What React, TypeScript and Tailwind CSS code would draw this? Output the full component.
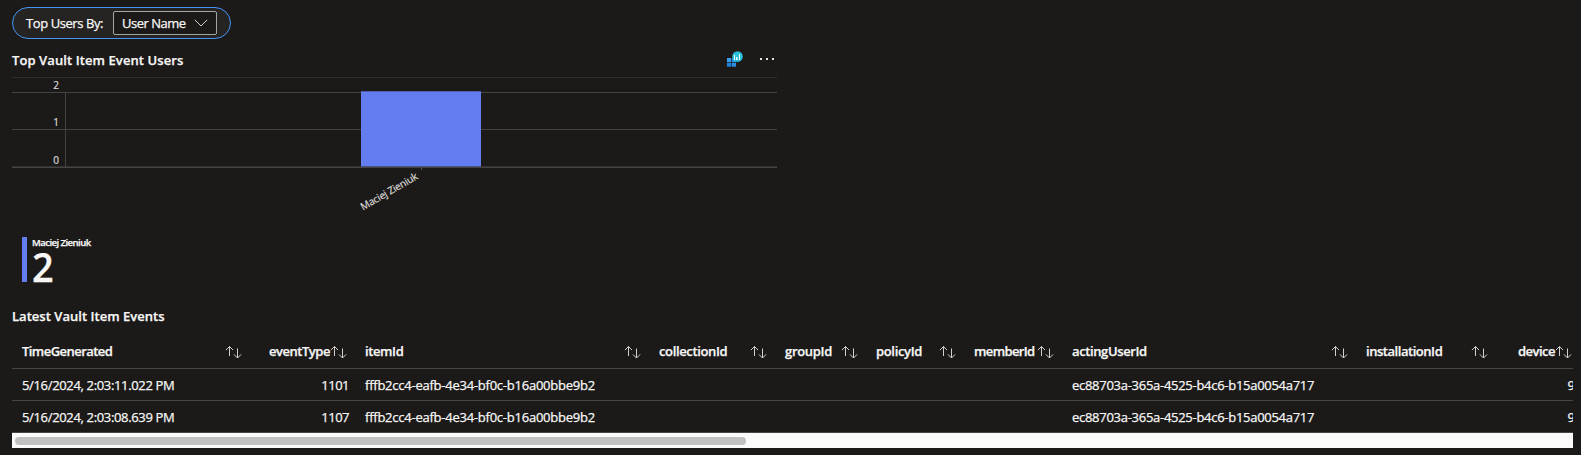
import React from "react";

type Column = {
  key: string;
  width: string;
  tracking: string;
  layout: string;
  align?: "right";
};

const columns: Column[] = [
  { key: "TimeGenerated", width: "w-[245px]", tracking: "tracking-[-0.55px]", layout: "justify-between pl-[10px] pr-[15px]" },
  { key: "eventType", width: "w-[98px]", tracking: "tracking-[-0.47px]", layout: "justify-end pr-[8px]", align: "right" },
  { key: "itemId", width: "w-[294px]", tracking: "tracking-[-0.4px]", layout: "justify-between pl-[10px] pr-[8px]" },
  { key: "collectionId", width: "w-[126px]", tracking: "tracking-[-0.36px]", layout: "justify-between pl-[10px] pr-[8px]" },
  { key: "groupId", width: "w-[91px]", tracking: "tracking-[-0.32px]", layout: "justify-between pl-[10px] pr-[8px]" },
  { key: "policyId", width: "w-[98px]", tracking: "tracking-[-0.34px]", layout: "justify-between pl-[10px] pr-[8px]" },
  { key: "memberId", width: "w-[98px]", tracking: "tracking-[-0.62px]", layout: "justify-between pl-[10px] pr-[8px]" },
  { key: "actingUserId", width: "w-[294px]", tracking: "tracking-[-0.38px]", layout: "justify-between pl-[10px] pr-[8px]" },
  { key: "installationId", width: "w-[140px]", tracking: "tracking-[-0.46px]", layout: "justify-between pl-[10px] pr-[8px]" },
  { key: "device", width: "w-[85px]", tracking: "tracking-[-0.5px]", layout: "justify-end pr-[9px]", align: "right" },
];

const rows: Record<string, string>[] = [
  {
    TimeGenerated: "5/16/2024, 2:03:11.022 PM",
    eventType: "1101",
    itemId: "fffb2cc4-eafb-4e34-bf0c-b16a00bbe9b2",
    actingUserId: "ec88703a-365a-4525-b4c6-b15a0054a717",
    device: "9",
  },
  {
    TimeGenerated: "5/16/2024, 2:03:08.639 PM",
    eventType: "1107",
    itemId: "fffb2cc4-eafb-4e34-bf0c-b16a00bbe9b2",
    actingUserId: "ec88703a-365a-4525-b4c6-b15a0054a717",
    device: "9",
  },
];

const cellTracking: Record<string, string> = {
  TimeGenerated: "tracking-[-0.34px]",
  eventType: "tracking-[-0.5px]",
  itemId: "tracking-[-0.24px]",
  actingUserId: "tracking-[-0.28px]",
};

function SortIcon() {
  return (
    <svg width="17" height="14" viewBox="0 0 17 14" fill="none" stroke="#d2d0ce" strokeWidth="1" className="mt-[2px] shrink-0">
      <path d="M4.5 11V1.5M.9 5.1l3.6-3.6 3.6 3.6" />
      <path d="M12.5 3.5V13M8.9 9.4l3.6 3.6 3.6-3.6" />
    </svg>
  );
}

function MetricsIcon() {
  return (
    <svg width="16" height="16" viewBox="0 0 16 16">
      <rect x="0" y="7" width="4.3" height="4" fill="#3a9bea" />
      <rect x="0" y="11.7" width="4.3" height="4" fill="#1f86dc" />
      <rect x="5" y="11.7" width="4" height="4" fill="#2b8fe6" />
      <rect x="5" y="7" width="4" height="4" fill="#2b8fe6" />
      <circle cx="10.5" cy="5.6" r="5.3" fill="#27bfdc" />
      <rect x="7" y="4" width="1" height="5" fill="#ffffff" />
      <rect x="9" y="6" width="1" height="3" fill="#e6f9fc" />
      <rect x="10" y="6" width="1" height="3" fill="#8fe0ee" />
      <rect x="12" y="3" width="1" height="6" fill="#ffffff" />
    </svg>
  );
}

function BarChart() {
  return (
    <svg width="765" height="146" viewBox="0 0 765 146" className="block" fontFamily='"Open Sans", "Noto Sans", sans-serif'>
      <g shapeRendering="crispEdges">
        <rect x="0" y="14" width="765" height="1" fill="#444342" />
        <rect x="0" y="51" width="765" height="1" fill="#444342" />
        <rect x="0" y="88" width="765" height="1" fill="#323130" />
        <rect x="0" y="89" width="765" height="1" fill="#454443" />
        <rect x="53" y="15" width="1" height="74" fill="#444342" />
        <rect x="409" y="90" width="1" height="2" fill="#5a5958" />
        <rect x="349" y="13" width="120" height="75" fill="#637cef" />
        <rect x="349" y="13" width="120" height="1" fill="#4e5fae" />
        <rect x="349" y="88" width="120" height="1" fill="#4b5383" />
      </g>
      <g fontSize="10" fill="#dedcda" stroke="#dedcda" strokeWidth="0.2" textAnchor="end">
        <text x="47" y="11">2</text>
        <text x="47" y="48">1</text>
        <text x="47" y="86">0</text>
        <text transform="translate(406.5 100.5) rotate(-30)" letterSpacing="-0.18">
          Maciej Zieniuk
        </text>
      </g>
    </svg>
  );
}

export default function App() {
  return (
    <div className="h-[455px] w-[1581px] overflow-hidden bg-[#1b1a19] pt-[7px] pr-2 pl-3 font-['Open_Sans','Noto_Sans',sans-serif] text-[13px] leading-[18px] text-[#f8f7f6] [-webkit-text-stroke:0.25px]">
      <div className="flex h-8 w-[219px] items-center rounded-full border border-[#4593f5] bg-[#252423] pl-[13px]">
        <span className="w-[87px] font-medium tracking-[-0.42px] whitespace-nowrap">Top Users By:</span>
        <button className="flex h-6 w-[104px] items-center justify-between rounded-xs border border-[#a6a4a2] bg-[#1b1a19] pr-[8px] pl-2 font-medium">
          <span className="tracking-[-0.5px] whitespace-nowrap">User Name</span>
          <svg width="14" height="8" viewBox="0 0 14 8" fill="none" stroke="#d2d0ce" strokeWidth="1">
            <path d="M.8.8 7 7 13.2.8" />
          </svg>
        </button>
      </div>

      <section className="w-[765px]">
        <header className="flex h-[38px] items-center justify-between pt-1">
          <h2 className="font-semibold tracking-[0.09px]">Top Vault Item Event Users</h2>
          <div className="flex items-center gap-[17px] pr-[2px] pb-[2px]">
            <MetricsIcon />
            <svg width="15" height="2" viewBox="0 0 15 2" fill="#e6e4e2" shapeRendering="crispEdges">
              <rect x="0" width="2" height="2" />
              <rect x="6" width="2" height="2" />
              <rect x="12" width="2" height="2" />
            </svg>
          </div>
        </header>
        <div className="border-t border-[#302f2e]">
          <BarChart />
        </div>
      </section>

      <div className="mt-[13px] ml-[10px] flex h-[45px] gap-[5px]">
        <div className="w-[5px] bg-[#637cef]" />
        <div className="flex flex-col font-semibold">
          <span className="text-[9.5px] leading-[11px] tracking-[-0.53px]">Maciej Zieniuk</span>
          <span className="origin-left scale-x-95 text-[40px] leading-[38px]">2</span>
        </div>
      </div>

      <section className="mt-[25px]">
        <h2 className="font-semibold tracking-[0.03px]">Latest Vault Item Events</h2>
        <div className="mt-[9px] w-[1561px] overflow-hidden">
          <div className="flex h-[35px] w-[1569px] items-center border-b border-[#484644]">
            {columns.map((c) => (
              <div key={c.key} className={`flex shrink-0 items-center ${c.width} ${c.layout}`}>
                <span className={`font-semibold whitespace-nowrap ${c.tracking}`}>{c.key}</span>
                <SortIcon />
              </div>
            ))}
          </div>
          {rows.map((row) => (
            <div key={row.TimeGenerated} className="flex h-8 w-[1569px] items-center border-b border-[#484644] font-medium">
              {columns.map((c) => (
                <div
                  key={c.key}
                  className={`shrink-0 whitespace-nowrap ${c.width} ${cellTracking[c.key] ?? ""} ${
                    c.align === "right" ? "pr-[6px] text-right" : "pl-[10px]"
                  }`}
                >
                  {row[c.key]}
                </div>
              ))}
            </div>
          ))}
          <div className="flex h-[15px] items-center bg-[#fafafa] pt-px pl-[3px]">
            <div className="h-2 w-[731px] rounded-full bg-[#c1c1c1]" />
          </div>
        </div>
      </section>
    </div>
  );
}
